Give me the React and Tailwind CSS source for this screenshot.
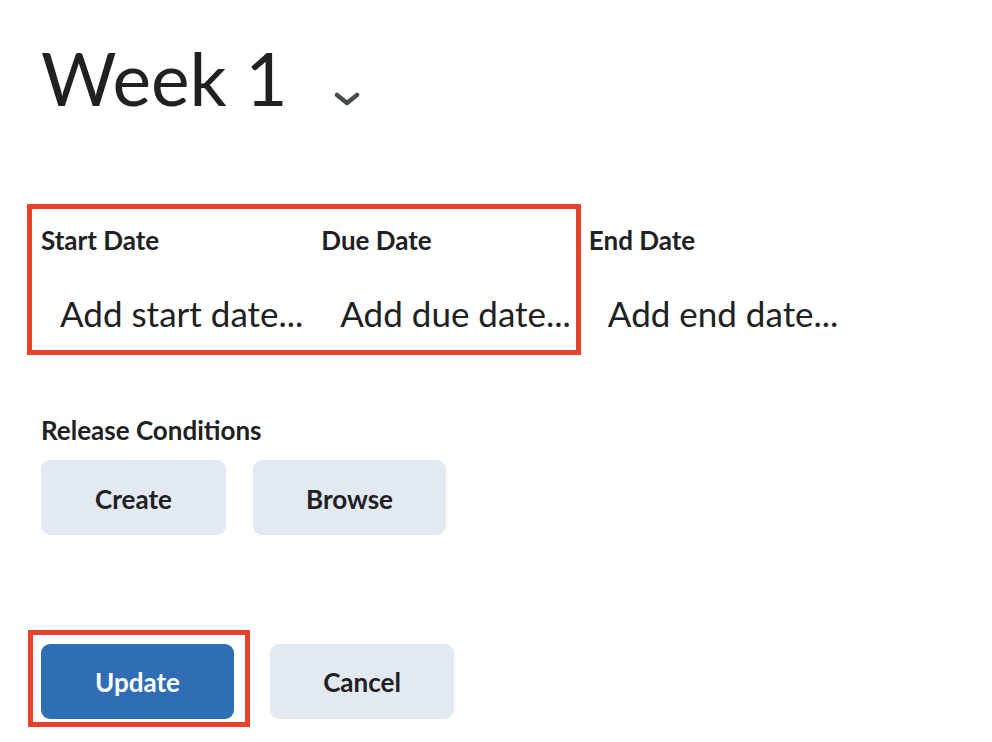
export default function App() {
  const font = { fontFamily: "Lato, 'Noto Sans', sans-serif" };
  return (
    <div className="w-[992px] h-[742px] bg-white text-[#202122] pt-[42px] pl-[41px] font-['Lato',sans-serif]" style={font}>
      <div className="flex items-start">
        <h1 className="text-[73px] leading-[73px] font-normal">Week 1</h1>
        <svg className="ml-[46px] mt-[50px]" width="26" height="14" viewBox="0 0 26 14" fill="none">
          <path d="M3 3 L13 11 L23 3" stroke="#494c4e" strokeWidth="4.5" strokeLinecap="round" strokeLinejoin="round" />
        </svg>
      </div>

      <div className="relative mt-[112px] flex">
        <div className="absolute left-[-14px] top-[-23px] w-[554px] h-[151px] border-[5px] border-[#e8412b] pointer-events-none" />
        {[
          ["Start Date", "Add start date..."],
          ["Due Date", "Add due date..."],
          ["End Date", "Add end date..."],
        ].map(([l, v]) => (
          <div key={l} className="flex flex-col">
            <div className="text-[26px] leading-[26px] font-bold">{l}</div>
            <div className="mt-[43px] pl-[19px] pr-[18px] text-[35px] leading-[35px] whitespace-nowrap">{v}</div>
          </div>
        ))}
      </div>

      <div className="mt-[86px] text-[26px] leading-[26px] font-bold">Release Conditions</div>
      <div className="mt-[17px] flex gap-[27px]">
        <button className="w-[185px] h-[75px] pt-[3px] rounded-[9px] bg-[#e3e9f1] text-[26px] font-bold">Create</button>
        <button className="w-[193px] h-[75px] pt-[3px] rounded-[9px] bg-[#e3e9f1] text-[26px] font-bold">Browse</button>
      </div>

      <div className="mt-[109px] flex gap-[36px]">
        <div className="relative">
          <div className="absolute left-[-13px] top-[-14px] w-[222px] h-[97px] border-[5px] border-[#e8412b] pointer-events-none" />
          <button className="w-[193px] h-[75px] pt-[2px] rounded-[9px] bg-[#2f6db5] text-white text-[26px] font-bold">Update</button>
        </div>
        <button className="w-[184px] h-[75px] pt-[2px] rounded-[9px] bg-[#e3e9f1] text-[26px] font-bold">Cancel</button>
      </div>
    </div>
  );
}
